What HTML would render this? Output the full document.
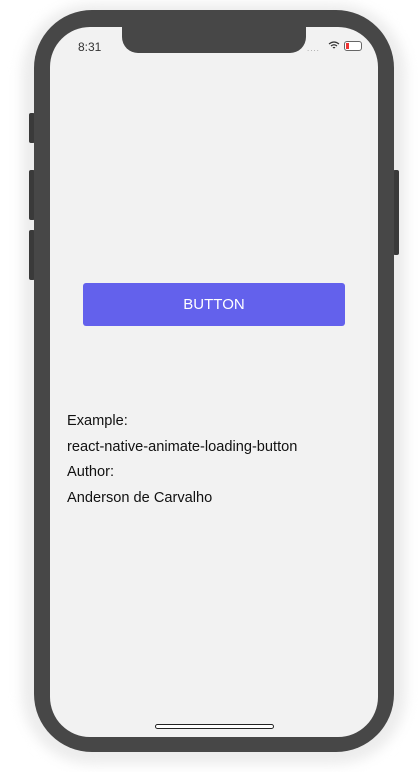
<!DOCTYPE html>
<html><head><style>
html,body{margin:0;padding:0;background:#fff;}
body{width:418px;height:772px;position:relative;overflow:hidden;font-family:"Liberation Sans",sans-serif;}
.shadow{position:absolute;left:22px;top:4px;width:384px;height:760px;border-radius:70px;background:#ececec;filter:blur(6px);}
.frame{position:absolute;left:34px;top:10px;width:360px;height:742px;border-radius:58px;background:#474747;}
.btn{position:absolute;background:#3a3a3a;border-radius:2px;}
.screen{position:absolute;left:50px;top:27px;width:328px;height:710px;border-radius:40px;background:#f2f2f2;overflow:hidden;}
.notch{position:absolute;left:72px;top:-2px;width:184px;height:28px;background:#474747;border-radius:0 0 16px 16px;}
.time{position:absolute;left:28px;top:13px;font-size:12px;color:#333;}
.b{position:absolute;left:33px;top:256px;width:262px;height:43px;background:#6361ec;border-radius:3px;color:#fff;font-size:15px;text-align:center;line-height:43px;}
.t{position:absolute;left:17px;font-size:14.6px;color:#111;}
.home{position:absolute;left:105px;top:697px;width:117px;height:3px;border:1px solid #222;border-radius:3px;background:#fff;}
</style></head><body>
<div class="shadow"></div>
<div class="btn" style="left:29px;top:113px;width:6px;height:30px"></div>
<div class="btn" style="left:29px;top:170px;width:6px;height:50px"></div>
<div class="btn" style="left:29px;top:230px;width:6px;height:50px"></div>
<div class="btn" style="left:393px;top:170px;width:6px;height:85px"></div>
<div class="frame"></div>
<div class="screen">
<div class="notch"></div>
<div class="time">8:31</div>
<div style="position:absolute;left:257px;top:17px;font-size:8px;color:#999;letter-spacing:1px">....</div>
<svg style="position:absolute;left:278px;top:14px" width="12" height="9" viewBox="0 0 12 9"><path d="M1 3Q6 -1 11 3M3 5Q6 2.5 9 5M5 7Q6 6 7 7" stroke="#333" fill="none" stroke-width="1.2"/></svg>
<div style="position:absolute;left:294px;top:14px;width:16px;height:8px;border:1px solid #666;border-radius:3px;background:#fff"><div style="width:3px;height:6px;margin:1px;background:#e33;"></div></div>
<div class="b">BUTTON</div>
<div class="t" style="top:386px">Example:</div>
<div class="t" style="top:412px">react-native-animate-loading-button</div>
<div class="t" style="top:437px">Author:</div>
<div class="t" style="top:463px">Anderson de Carvalho</div>
<div class="home"></div>
</div>
</body></html>
